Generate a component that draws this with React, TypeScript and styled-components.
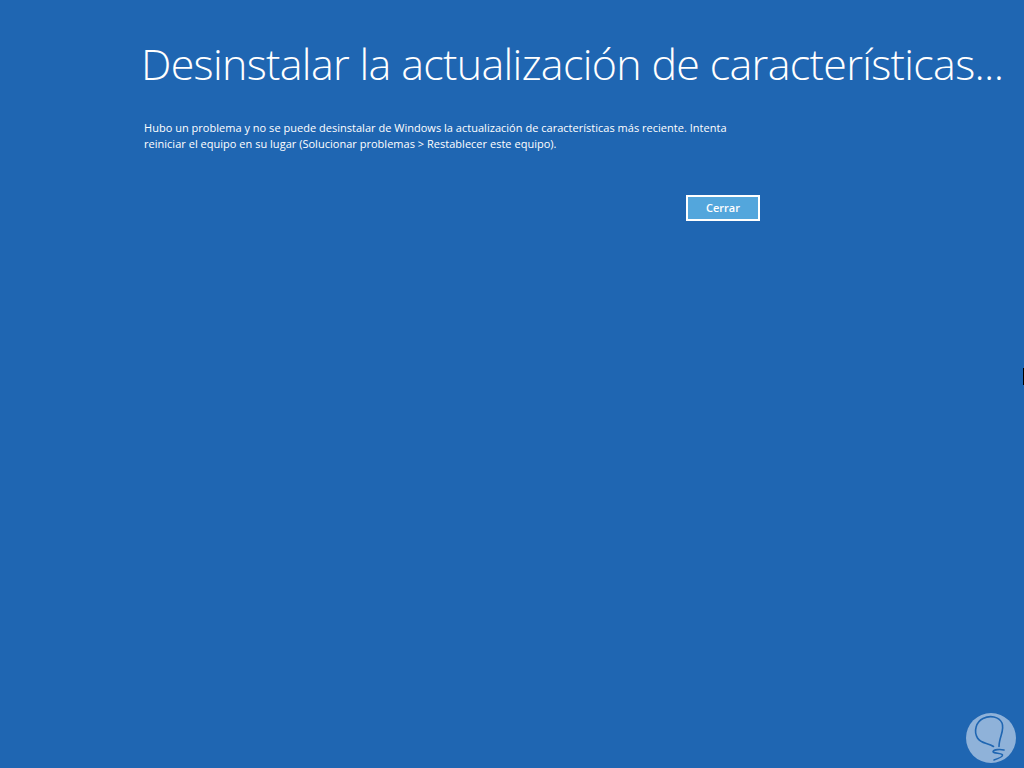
import React from "react"
import styled, { createGlobalStyle } from "styled-components"

const GlobalStyle = createGlobalStyle`
  html, body {
    margin: 0;
    padding: 0;
    height: 100%;
    background: #1f66b2;
    overflow: hidden;
  }
`

export default function App() {
  return (
    <Screen>
      <GlobalStyle />
      <Title>Desinstalar la actualización de características...</Title>
      <Content>
        <Message>
          Hubo un problema y no se puede desinstalar de Windows la actualización de características más reciente. Intenta
          <br />
          reiniciar el equipo en su lugar (Solucionar problemas &gt; Restablecer este equipo).
        </Message>
        <Actions>
          <CloseButton type="button">Cerrar</CloseButton>
        </Actions>
      </Content>
      <EdgeMark />
      <Watermark viewBox="0 0 50 50" aria-hidden="true">
        <circle cx="25" cy="25" r="25" fill="#8fb2d9" />
        <path
          d="M27.500 33.500C22 29.500 15 31 11.500 25C7.500 18 10 9 17 5.500C24 2 33 3.500 36 10C39 17 33 24 33 33.500M38 37C34 36 28 36.500 27 38.500C26.500 40.500 36 40 36.500 42C37 44 31 46 28 47"
          fill="none"
          stroke="#1f66b2"
          strokeWidth="1.600"
          strokeLinecap="round"
        />
      </Watermark>
    </Screen>
  )
}

const Screen = styled.div`
  position: relative;
  box-sizing: border-box;
  width: 1024px;
  height: 768px;
  padding: 35px 0 0 141px;
  background: #1f66b2;
  color: #ffffff;
  overflow: hidden;
`

const Title = styled.h1`
  margin: 0;
  font-family: "Open Sans", "Liberation Sans", sans-serif;
  font-size: 43px;
  line-height: 58px;
  font-weight: 300;
  letter-spacing: -0.68px;
  white-space: nowrap;
`

const Content = styled.div`
  width: 616px;
  margin: 27px 0 0 3px;
  display: flex;
  flex-direction: column;
`

const Message = styled.p`
  margin: 0;
  font-family: "Open Sans", "Liberation Sans", sans-serif;
  font-size: 11px;
  line-height: 16px;
  font-weight: 400;
  letter-spacing: 0.02px;
  white-space: nowrap;
`

const Actions = styled.div`
  display: flex;
  justify-content: flex-end;
  margin-top: 43px;
`

const CloseButton = styled.button`
  box-sizing: border-box;
  width: 74px;
  height: 26px;
  padding: 0 0 2px;
  border: 2px solid #ffffff;
  border-radius: 0;
  background: #53a6dc;
  color: #ffffff;
  font-family: "Open Sans", "Liberation Sans", sans-serif;
  font-size: 11px;
  font-weight: 600;
`

const EdgeMark = styled.div`
  position: absolute;
  right: 0;
  top: 368px;
  width: 1px;
  height: 17px;
  background: #000000;
`

const Watermark = styled.svg`
  position: absolute;
  left: 966px;
  top: 713px;
  width: 50px;
  height: 50px;
`
